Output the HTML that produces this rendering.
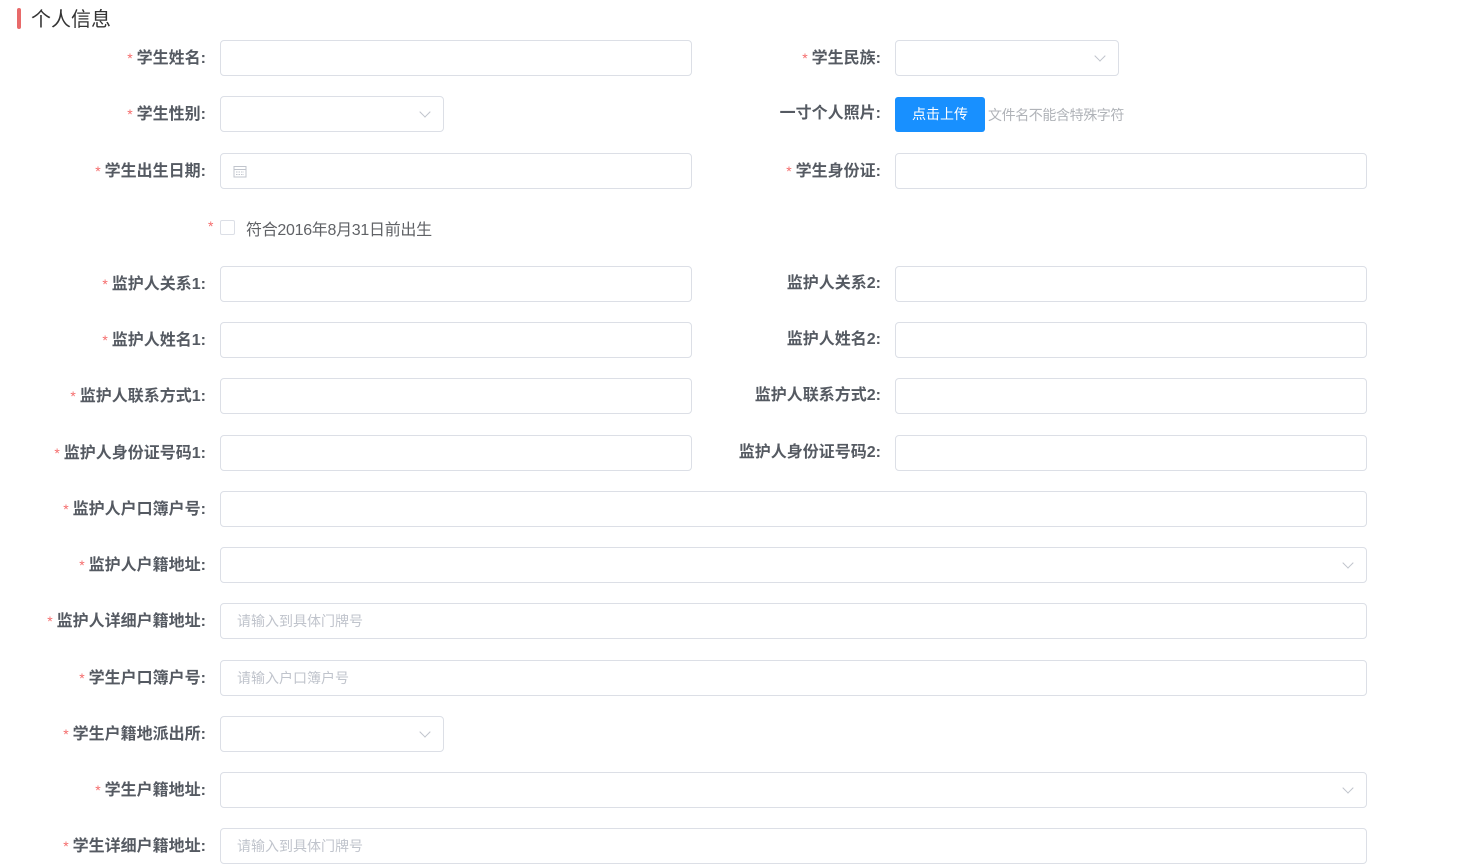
<!DOCTYPE html>
<html><head><meta charset="utf-8"><style>
body{margin:0;width:1478px;height:868px;background:#fff;font-family:"Liberation Sans","Noto Sans CJK SC",sans-serif;position:relative;overflow:hidden}
.t{position:absolute;left:17px;top:8px;width:4px;height:21px;background:#e86a6a;border-radius:2px}
.tt{position:absolute;left:31px;top:7px;font-size:20px;color:#333;line-height:26px}
.l{position:absolute;font-size:16px;font-weight:bold;color:#555a62;line-height:20px;text-align:right;white-space:nowrap}
.l i{font-style:normal;color:#f56c6c;font-weight:normal;font-size:14px;margin-right:4px}
.b{position:absolute;height:34px;border:1px solid #dcdfe6;border-radius:4px;box-sizing:content-box;font-size:14px;color:#c0c4cc;line-height:34px;text-indent:16px}
.ar{position:absolute;right:14px;top:11px;width:7px;height:7px;border-right:1px solid #c0c4cc;border-bottom:1px solid #c0c4cc;transform:rotate(45deg)}
</style></head><body>
<div class="t"></div><div class="tt">个人信息</div>

<div class="l" style="right:1272px;top:48px"><i>*</i>学生姓名:</div>
<div class="b" style="left:220px;top:40px;width:470px"></div>
<div class="l" style="right:597px;top:48px"><i>*</i>学生民族:</div>
<div class="b" style="left:895px;top:40px;width:222px"><span class="ar"></span></div>

<div class="l" style="right:1272px;top:104px"><i>*</i>学生性别:</div>
<div class="b" style="left:220px;top:96px;width:222px"><span class="ar"></span></div>
<div class="l" style="right:597px;top:104px">一寸个人照片:</div>
<div style="position:absolute;left:895px;top:97px;width:90px;height:35px;background:#1890ff;border-radius:3px;color:#fff;font-size:14px;line-height:35px;text-align:center">点击上传</div>
<div style="position:absolute;left:988px;top:105px;font-size:14px;color:#b0b3b8;letter-spacing:-0.4px">文件名不能含特殊字符</div>

<div class="l" style="right:1272px;top:161px"><i>*</i>学生出生日期:</div>
<div class="b" style="left:220px;top:153px;width:470px"><svg style="position:absolute;left:12px;top:11px" width="14" height="13" viewBox="0 0 14 13"><rect x="1" y="1.5" width="12" height="10.5" fill="none" stroke="#c0c4cc"/><line x1="1" y1="4.5" x2="13" y2="4.5" stroke="#c0c4cc"/><path d="M3 7h8M3 9.5h8" stroke="#c0c4cc" stroke-dasharray="1.5 1"/></svg></div>
<div class="l" style="right:597px;top:161px"><i>*</i>学生身份证:</div>
<div class="b" style="left:895px;top:153px;width:470px"></div>

<div style="position:absolute;left:208px;top:218px;color:#f56c6c;font-size:14px">*</div>
<div style="position:absolute;left:220px;top:220px;width:13px;height:13px;border:1px solid #dcdfe6;border-radius:2px"></div>
<div style="position:absolute;left:246px;top:216px;font-size:16px;color:#606266;letter-spacing:-0.3px">符合2016年8月31日前出生</div>

<div class="l" style="right:1272px;top:274px"><i>*</i>监护人关系1:</div>
<div class="b" style="left:220px;top:266px;width:470px"></div>
<div class="l" style="right:597px;top:274px">监护人关系2:</div>
<div class="b" style="left:895px;top:266px;width:470px"></div>

<div class="l" style="right:1272px;top:330px"><i>*</i>监护人姓名1:</div>
<div class="b" style="left:220px;top:322px;width:470px"></div>
<div class="l" style="right:597px;top:330px">监护人姓名2:</div>
<div class="b" style="left:895px;top:322px;width:470px"></div>

<div class="l" style="right:1272px;top:386px"><i>*</i>监护人联系方式1:</div>
<div class="b" style="left:220px;top:378px;width:470px"></div>
<div class="l" style="right:597px;top:386px">监护人联系方式2:</div>
<div class="b" style="left:895px;top:378px;width:470px"></div>

<div class="l" style="right:1272px;top:443px"><i>*</i>监护人身份证号码1:</div>
<div class="b" style="left:220px;top:435px;width:470px"></div>
<div class="l" style="right:597px;top:443px">监护人身份证号码2:</div>
<div class="b" style="left:895px;top:435px;width:470px"></div>

<div class="l" style="right:1272px;top:499px"><i>*</i>监护人户口簿户号:</div>
<div class="b" style="left:220px;top:491px;width:1145px"></div>

<div class="l" style="right:1272px;top:555px"><i>*</i>监护人户籍地址:</div>
<div class="b" style="left:220px;top:547px;width:1145px"><span class="ar"></span></div>

<div class="l" style="right:1272px;top:611px"><i>*</i>监护人详细户籍地址:</div>
<div class="b" style="left:220px;top:603px;width:1145px">请输入到具体门牌号</div>

<div class="l" style="right:1272px;top:668px"><i>*</i>学生户口簿户号:</div>
<div class="b" style="left:220px;top:660px;width:1145px">请输入户口簿户号</div>

<div class="l" style="right:1272px;top:724px"><i>*</i>学生户籍地派出所:</div>
<div class="b" style="left:220px;top:716px;width:222px"><span class="ar"></span></div>

<div class="l" style="right:1272px;top:780px"><i>*</i>学生户籍地址:</div>
<div class="b" style="left:220px;top:772px;width:1145px"><span class="ar"></span></div>

<div class="l" style="right:1272px;top:836px"><i>*</i>学生详细户籍地址:</div>
<div class="b" style="left:220px;top:828px;width:1145px">请输入到具体门牌号</div>
</body></html>
